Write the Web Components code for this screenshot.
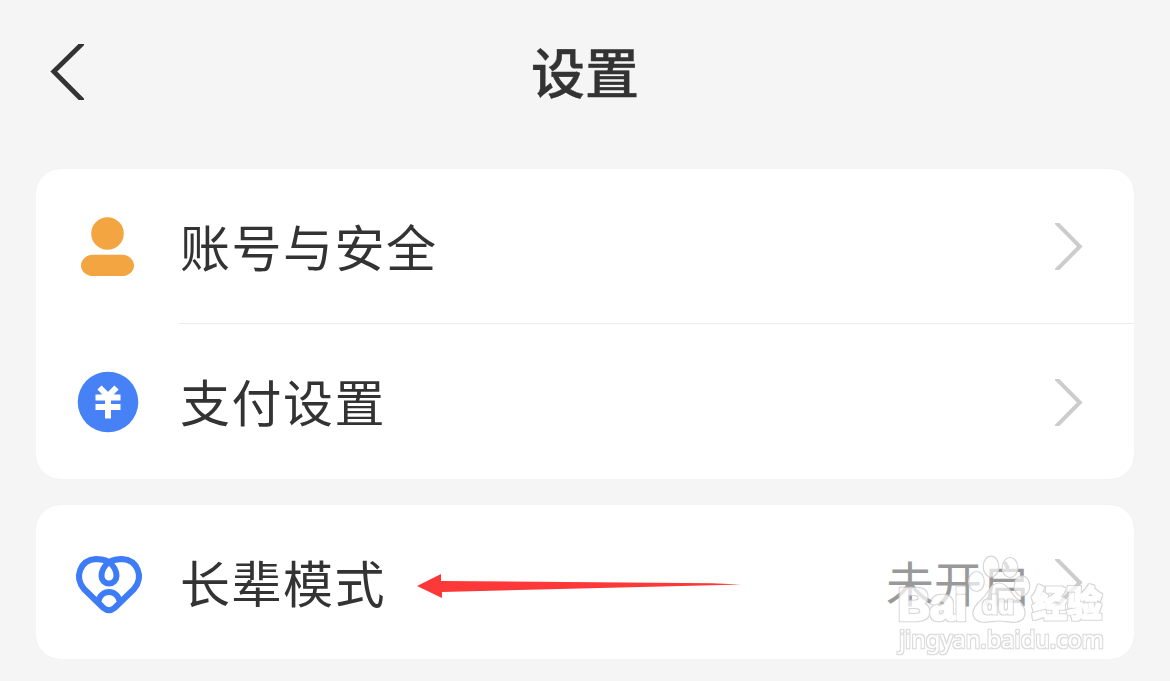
<!DOCTYPE html>
<html lang="zh-CN">
<head>
<meta charset="utf-8">
<title>设置</title>
<style>
html,body{margin:0;height:100%;background:#f5f5f5;overflow:hidden}
body{font-family:"Noto Sans CJK SC",sans-serif;color:#333}
</style>
</head>
<body>
<settings-page>
  <nav-bar slot="nav">设置</nav-bar>
  <settings-card>
    <settings-row divided><icon-user slot="icon"></icon-user>账号与安全</settings-row>
    <settings-row><icon-pay slot="icon"></icon-pay>支付设置</settings-row>
  </settings-card>
  <settings-card>
    <settings-row compact><icon-heart slot="icon"></icon-heart>长辈模式<span slot="value">未开启</span></settings-row>
  </settings-card>
  <pointer-arrow slot="overlay"></pointer-arrow>
  <site-watermark slot="overlay"></site-watermark>
</settings-page>
<script>
const define = (name, html) => customElements.define(name, class extends HTMLElement {
  constructor() {
    super();
    this.attachShadow({mode: 'open'}).innerHTML = html;
  }
});

define('settings-page', `<style>
:host{display:block;position:relative;width:1170px;height:681px;background:#f5f5f5;overflow:hidden}
main{display:flex;flex-direction:column;gap:26px;padding:0 36px}
</style><slot name="nav"></slot><main><slot></slot></main><slot name="overlay"></slot>`);

define('nav-bar', `<style>
:host{display:grid;grid-template-columns:100px 1fr 100px;align-items:center;height:144px;padding-bottom:25px;box-sizing:content-box}
svg{display:block;width:100px;height:144px}
h1{margin:0;padding-bottom:2px;font-size:54px;line-height:80px;font-weight:500;text-align:center;color:#333;-webkit-text-stroke:.4px #333}
</style><svg viewBox="0 0 100 144"><clipPath id="c"><rect x="40" y="44" width="44" height="56"/></clipPath><path clip-path="url(#c)" d="M85 41 53.800 71.500 85 103" fill="none" stroke="#333" stroke-width="4.800"/></svg><h1><slot></slot></h1>`);

define('settings-card', `<style>
:host{display:block;background:#fff;border-radius:24px;overflow:hidden;box-shadow:0 0 1px #e4e4e4}
</style><slot></slot>`);

define('settings-row', `<style>
:host{display:grid;grid-template-columns:144px 1fr auto 106px;height:155px;align-items:center}
:host([compact]){height:154px}
:host([divided]){height:154px;border-bottom:1px solid #eee;border-image:linear-gradient(90deg,transparent 144px,#ececec 144px) 1}
.icon{align-self:start;display:block}
.label{padding-bottom:3px;font-size:50px;letter-spacing:1.500px;line-height:72px;color:#333;white-space:nowrap}
.value{padding-bottom:3px;margin-right:-2px;font-size:48px;line-height:72px;color:#999;white-space:nowrap}
svg{display:block;width:106px;height:154px}
</style><span class="icon"><slot name="icon"></slot></span><span class="label"><slot></slot></span><span class="value"><slot name="value"></slot></span>
<svg viewBox="0 0 106 154"><clipPath id="c"><rect x="27" y="54" width="60" height="47"/></clipPath><path clip-path="url(#c)" d="M25 50.500 51.800 77.500 25 104.500" fill="none" stroke="#ccc" stroke-width="4"/></svg>`);

const iconStyle = '<style>:host,svg{display:block;width:144px;height:154px}</style>';
define('icon-user', iconStyle + `<svg viewBox="36 169 144 154"><g fill="#f2a541"><circle cx="107.500" cy="233.500" r="16.300"/><rect x="81" y="254.800" width="53" height="21.200" rx="12" ry="10.600"/></g></svg>`);
define('icon-pay', iconStyle + `<svg viewBox="36 324 144 154"><circle cx="108" cy="402" r="30.300" fill="#4682f6"/><path d="M99.500 387.500 108 396 116.500 387.500M95.500 397.500H120.500M95.500 407H120.500M108 396V418.500" fill="none" stroke="#fff" stroke-width="6"/></svg>`);
define('icon-heart', iconStyle + `<svg viewBox="36 505 144 154"><g fill="none" stroke="#3e7cf7" stroke-width="6" stroke-linejoin="round"><path d="M109 562C104 559.500 99 559 96 559C80 560 74 577 84 589L103.500 608Q109 612.500 114.500 608L134 589C144 577 138 560 122 559C119 559 114 559.500 109 562C104 566 101.500 571 101.500 576A7.500 7.500 0 0 0 116.500 576C116.500 571 114 566 109 562Z"/><path d="M98 602C101 588.500 117 588.500 120 602"/></g></svg>`);

define('pointer-arrow', `<style>:host{position:absolute;left:416px;top:572px;width:330px;height:30px}svg{display:block}</style>
<svg width="330" height="30" viewBox="416 572 330 30"><path d="M417 586 441 574V581L712 583.300 741 584.400 712 585.200 442 592V598Z" fill="#fc3838"/></svg>`);

define('site-watermark', `<style>:host{position:absolute;left:880px;top:545px;width:250px;height:120px}svg{display:block}
text{stroke-linejoin:round}</style>
<svg width="250" height="120" viewBox="880 545 250 120">
<filter id="edge" x="-5%" y="-10%" width="110%" height="120%" color-interpolation-filters="sRGB"><feMorphology in="SourceAlpha" operator="dilate" radius="1" result="d"/><feFlood flood-color="#c9c9c9"/><feComposite in2="d" operator="in" result="o"/><feMerge><feMergeNode in="o"/><feMergeNode in="SourceGraphic"/></feMerge></filter>
<g fill="#fff" fill-opacity=".68" stroke="#d6d6d6" stroke-width="1.200">
<ellipse cx="976.500" cy="581.500" rx="7.800" ry="10"/><ellipse cx="991" cy="566.500" rx="7.800" ry="10.300"/><ellipse cx="1010" cy="567.500" rx="7.800" ry="10"/><ellipse cx="1022" cy="586" rx="7.800" ry="10"/>
<path d="M999 583C991 583 989 592 982 599C974 606 970 613 975 619C981 625 991 621 999 621S1017 625 1023 619C1028 612 1024 605 1016 598C1009 591 1007 583 999 583Z"/>
</g>
<g fill="#fff" stroke="#fff" opacity=".72" filter="url(#edge)">
<text x="898" y="619.500" stroke-width="2.500" font-family="Liberation Sans" font-weight="700" font-size="45" textLength="69" lengthAdjust="spacingAndGlyphs">Bai</text>
<text x="982" y="614" stroke-width="1" font-family="Liberation Sans" font-weight="700" font-size="26" textLength="32" lengthAdjust="spacingAndGlyphs">du</text>
<text x="1032" y="617" stroke-width="1.500" font-family="Noto Sans CJK SC" font-weight="900" font-size="36" textLength="70" lengthAdjust="spacingAndGlyphs">经验</text>
<text x="899" y="648" stroke-width=".3" font-family="Noto Sans" font-weight="400" font-size="24" textLength="205" lengthAdjust="spacingAndGlyphs">jingyan.baidu.com</text>
</g></svg>`);
</script>
</body>
</html>
